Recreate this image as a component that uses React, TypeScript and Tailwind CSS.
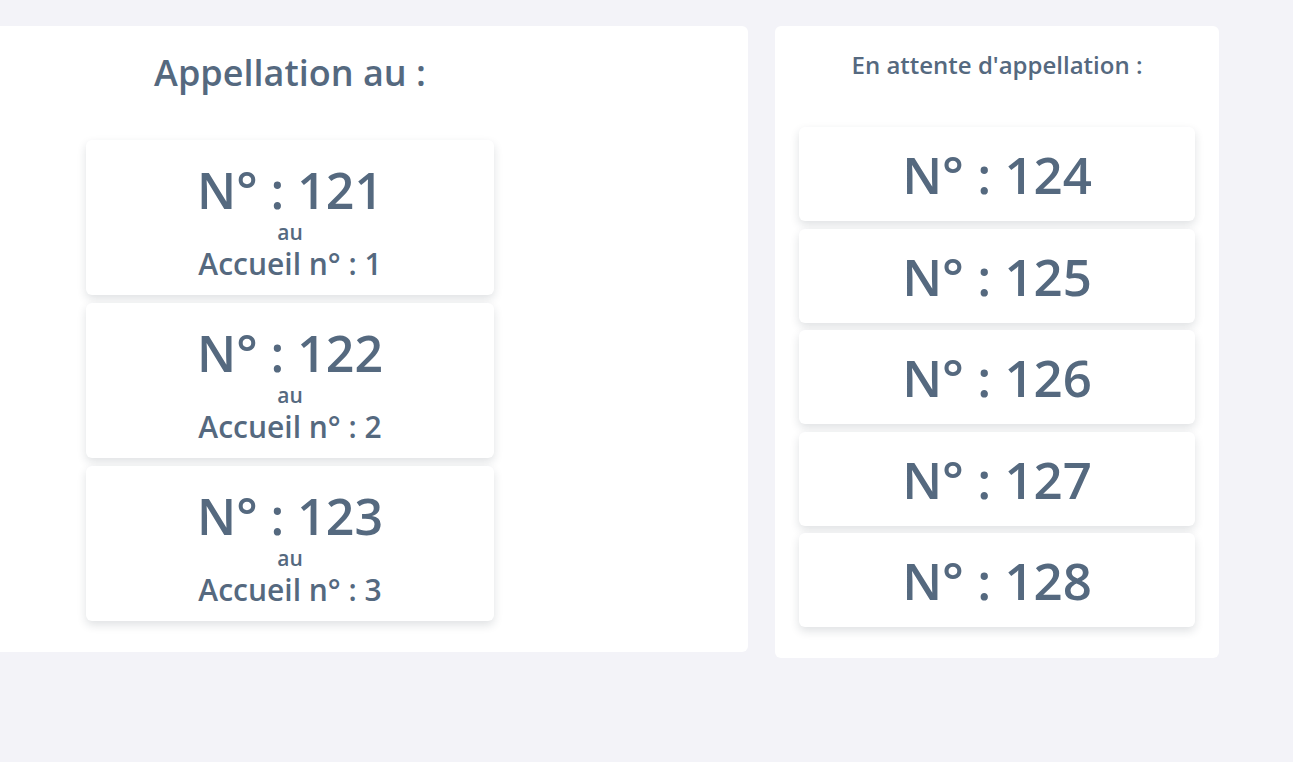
const called = [
  { num: 121, desk: 1 },
  { num: 122, desk: 2 },
  { num: 123, desk: 3 },
];

const waiting = [124, 125, 126, 127, 128];

export default function App() {
  return (
    <div
      className="min-h-screen bg-[#f3f3f8] pt-[26px] flex items-start gap-[27px] overflow-hidden text-[#55697f]"
      style={{ fontFamily: '"Open Sans", "Noto Sans", sans-serif' }}
    >
      {/* Appellation en cours */}
      <div className="ml-[-168px] w-[916px] shrink-0 bg-white rounded-md pt-[25px] pb-[31px] flex flex-col items-center">
        <h2 className="text-[36px] leading-[44px] font-semibold">Appellation au :</h2>
        <div className="mt-[45px] flex flex-col gap-2">
          {called.map((c) => (
            <div
              key={c.num}
              className="w-[408px] h-[155px] bg-white rounded-md shadow-[0_4px_10px_rgba(30,41,59,0.14)] pt-[25px] flex flex-col items-center"
            >
              <p className="text-[50px] leading-[50px] font-semibold">N° : {c.num}</p>
              <p className="mt-[6px] text-[21px] leading-[22px] font-semibold">au</p>
              <p className="mt-[4px] text-[30px] leading-[34px] font-semibold">Accueil n° : {c.desk}</p>
            </div>
          ))}
        </div>
      </div>

      {/* File d'attente */}
      <div className="w-[444px] shrink-0 bg-white rounded-md pt-[23px] pb-[31px] px-6">
        <h3 className="text-center text-[24px] leading-[32px] font-semibold">En attente d'appellation :</h3>
        <div className="mt-[46px] flex flex-col gap-[7.5px]">
          {waiting.map((n) => (
            <div
              key={n}
              className="h-[94px] bg-white rounded-md shadow-[0_4px_10px_rgba(30,41,59,0.14)] flex items-center justify-center"
            >
              <p className="text-[51px] leading-[60px] font-semibold">N° : {n}</p>
            </div>
          ))}
        </div>
      </div>
    </div>
  );
}
